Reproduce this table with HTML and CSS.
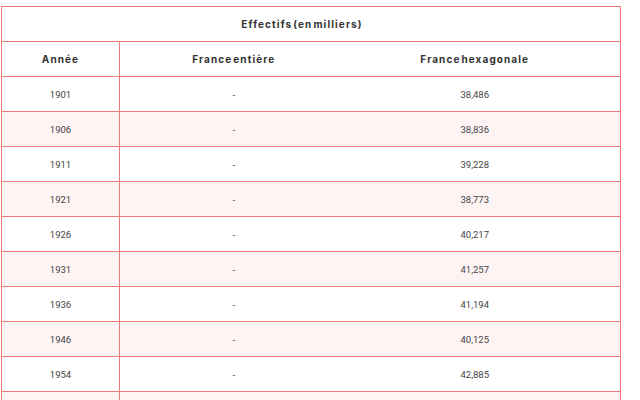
FILE: index.html
```
<!DOCTYPE html>
<html lang="fr">
<head>
<meta charset="utf-8">
<link rel="stylesheet" href="styles.css">
</head>
<body>
<table class="data">
  <colgroup><col class="c1"><col class="c2"><col class="c3"></colgroup>
  <thead>
    <tr><th colspan="3" class="title">Effectifs (en milliers)</th></tr>
    <tr><th>Année</th><th class="nb">France entière</th><th class="hex">France hexagonale</th></tr>
  </thead>
  <tbody>
    <tr><td>1901</td><td class="nb">-</td><td class="hex">38,486</td></tr>
    <tr><td>1906</td><td class="nb">-</td><td class="hex">38,836</td></tr>
    <tr><td>1911</td><td class="nb">-</td><td class="hex">39,228</td></tr>
    <tr><td>1921</td><td class="nb">-</td><td class="hex">38,773</td></tr>
    <tr><td>1926</td><td class="nb">-</td><td class="hex">40,217</td></tr>
    <tr><td>1931</td><td class="nb">-</td><td class="hex">41,257</td></tr>
    <tr><td>1936</td><td class="nb">-</td><td class="hex">41,194</td></tr>
    <tr><td>1946</td><td class="nb">-</td><td class="hex">40,125</td></tr>
    <tr><td>1954</td><td class="nb">-</td><td class="hex">42,885</td></tr>
    <tr><td>1962</td><td class="nb">-</td><td class="hex">46,459</td></tr>
  </tbody>
</table>
</body>
</html>
```
FILE: styles.css
```
html, body { margin: 0; padding: 0; background: #fff; }
body { padding: 6px 20px 0 1px; }
.data {
  width: 620px;
  border-collapse: collapse;
  font-family: Roboto, "Liberation Sans", sans-serif;
  font-size: 9.5px;
  color: #444;
}
.c1 { width: 118px; }
.c2 { width: 228px; }
.data th, .data td {
  height: 34px;
  padding: 0;
  text-align: center;
  vertical-align: middle;
  border-top: 1px solid #f07a7a;
  border-bottom: 1px solid #f07a7a;
}
.data tr > :first-child { border-left: 1px solid #f07a7a; border-right: 1px solid #f07a7a; }
.data tr > :last-child { border-right: 1px solid #f07a7a; }
.data th.title { border-left: 1px solid #f07a7a; border-right: 1px solid #f07a7a; padding-right: 18px; }
.data th {
  font-family: Inter, "Open Sans", sans-serif;
  font-weight: 700;
  font-size: 10px;
  letter-spacing: 1.1px;
  word-spacing: -2.5px;
  color: #333;
}
.data td.hex, .data th.hex { padding-right: 18px; }
.data tbody tr:nth-child(even) td { background: #fff4f4; }
```
